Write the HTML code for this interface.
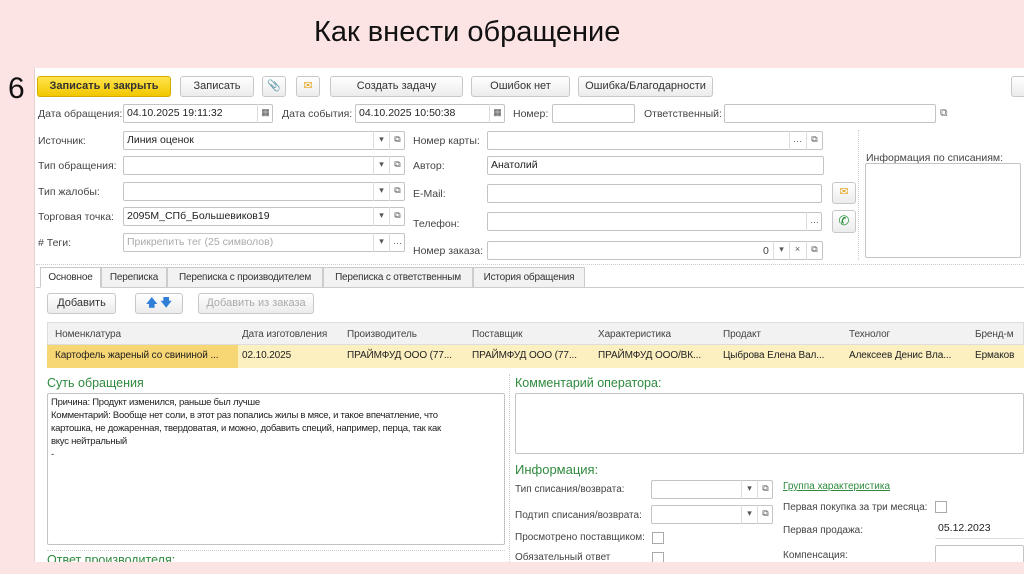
<!DOCTYPE html>
<html><head><meta charset="utf-8">
<style>
*{box-sizing:border-box;margin:0;padding:0}
body{width:1024px;height:574px;background:#fce4e4;font-family:"Liberation Sans",sans-serif;font-size:10.5px;color:#333;position:relative;overflow:hidden}
.a{position:absolute;white-space:nowrap}
.panel{position:absolute;left:34px;top:68px;width:990px;height:494px;background:#fff;border-left:1px solid #e6d0d0}
.btn{position:absolute;height:21px;border:1px solid #c8c8c8;border-radius:3px;background:linear-gradient(#fff,#ececec);text-align:center;line-height:19px;color:#333;font-size:11px}
.in{position:absolute;height:19px;border:1px solid #c4c4c4;border-radius:2px;background:#fff;line-height:17px;padding-left:3px;color:#222;white-space:nowrap;overflow:hidden}
.ic{position:absolute;width:16px;height:19px;text-align:center;line-height:17px;color:#555;font-size:9px;border-left:1px solid #ddd}
.lbl{position:absolute;color:#444;white-space:nowrap}
.g{color:#2f8a3e}
.cb{position:absolute;width:12px;height:12px;border:1px solid #aaa;background:#fff}
.tab{position:absolute;top:267px;height:21px;border:1px solid #ccc;background:#f2f2f2;line-height:19px;text-align:center;font-size:10px;letter-spacing:-0.2px}
.th{position:absolute;top:329px;font-size:10px;color:#444;letter-spacing:-0.1px}
.td{position:absolute;top:350px;font-size:10px;color:#222;letter-spacing:-0.1px}
</style></head><body>
<div class="a" style="left:314px;top:16px;font-size:29px;color:#111">Как внести обращение</div>
<div class="a" style="left:8px;top:72px;font-size:30px;color:#111">6</div>
<div class="panel"></div>

<div class="btn" style="left:37px;top:76px;width:134px;background:linear-gradient(#ffe44d,#f2c700);border-color:#d4ad00;font-weight:bold;color:#333">Записать и закрыть</div>
<div class="btn" style="left:180px;top:76px;width:74px">Записать</div>
<div class="btn" style="left:262px;top:76px;width:24px">&#128206;</div>
<div class="btn" style="left:296px;top:76px;width:24px;color:#e3a520">&#9993;</div>
<div class="btn" style="left:330px;top:76px;width:133px">Создать задачу</div>
<div class="btn" style="left:471px;top:76px;width:99px">Ошибок нет</div>
<div class="btn" style="left:578px;top:76px;width:135px">Ошибка/Благодарности</div>
<div class="btn" style="left:1011px;top:76px;width:20px"></div>

<div class="lbl" style="left:38px;top:108px">Дата обращения:</div>
<div class="in" style="left:123px;top:104px;width:150px">04.10.2025 19:11:32</div>
<div class="ic" style="left:257px;top:104px">&#9638;</div>
<div class="lbl" style="left:282px;top:108px">Дата события:</div>
<div class="in" style="left:355px;top:104px;width:150px">04.10.2025 10:50:38</div>
<div class="ic" style="left:489px;top:104px">&#9638;</div>
<div class="lbl" style="left:513px;top:108px">Номер:</div>
<div class="in" style="left:552px;top:104px;width:83px"></div>
<div class="lbl" style="left:644px;top:108px">Ответственный:</div>
<div class="in" style="left:724px;top:104px;width:212px"></div>
<div class="lbl" style="left:940px;top:107px;color:#666">&#10697;</div>

<div class="lbl" style="left:38px;top:135px">Источник:</div>
<div class="in" style="left:123px;top:131px;width:282px">Линия оценок</div>
<div class="lbl" style="left:38px;top:160px">Тип обращения:</div>
<div class="in" style="left:123px;top:156px;width:282px"></div>
<div class="lbl" style="left:38px;top:186px">Тип жалобы:</div>
<div class="in" style="left:123px;top:182px;width:282px"></div>
<div class="lbl" style="left:38px;top:211px">Торговая точка:</div>
<div class="in" style="left:123px;top:207px;width:282px">2095М_СПб_Большевиков19</div>
<div class="lbl" style="left:38px;top:237px"># Теги:</div>
<div class="in" style="left:123px;top:233px;width:282px;color:#aaa">Прикрепить тег (25 символов)</div>
<div class="ic" style="left:373px;top:131px">▾</div><div class="ic" style="left:389px;top:131px">&#10697;</div>
<div class="ic" style="left:373px;top:156px">▾</div><div class="ic" style="left:389px;top:156px">&#10697;</div>
<div class="ic" style="left:373px;top:182px">▾</div><div class="ic" style="left:389px;top:182px">&#10697;</div>
<div class="ic" style="left:373px;top:207px">▾</div><div class="ic" style="left:389px;top:207px">&#10697;</div>
<div class="ic" style="left:373px;top:233px">▾</div><div class="ic" style="left:389px;top:233px">…</div>

<div class="lbl" style="left:413px;top:135px">Номер карты:</div>
<div class="in" style="left:487px;top:131px;width:336px"></div>
<div class="ic" style="left:789px;top:131px">…</div><div class="ic" style="left:806px;top:131px">&#10697;</div>
<div class="lbl" style="left:413px;top:160px">Автор:</div>
<div class="in" style="left:487px;top:156px;width:337px">Анатолий</div>
<div class="lbl" style="left:413px;top:188px">E-Mail:</div>
<div class="in" style="left:487px;top:184px;width:335px"></div>
<div class="btn" style="left:832px;top:182px;width:24px;height:22px;color:#e3a520">&#9993;</div>
<div class="lbl" style="left:413px;top:218px">Телефон:</div>
<div class="in" style="left:487px;top:212px;width:335px"></div>
<div class="ic" style="left:806px;top:212px">…</div>
<div class="btn" style="left:832px;top:210px;width:24px;height:23px;color:#1a8a30;font-size:13px">&#9990;</div>
<div class="lbl" style="left:413px;top:245px">Номер заказа:</div>
<div class="in" style="left:487px;top:241px;width:336px"></div>
<div class="lbl" style="left:763px;top:245px">0</div>
<div class="ic" style="left:773px;top:241px">▾</div><div class="ic" style="left:789px;top:241px">×</div><div class="ic" style="left:806px;top:241px">&#10697;</div>
<div class="a" style="left:858px;top:130px;height:130px;border-left:1px dotted #ccc"></div>
<div class="lbl" style="left:866px;top:152px">Информация по списаниям:</div>
<div class="in" style="left:865px;top:163px;width:156px;height:95px"></div>

<div class="a" style="left:36px;top:264px;width:988px;border-top:1px dotted #ccc"></div>
<div class="a" style="left:36px;top:287px;width:988px;border-top:1px solid #ccc"></div>
<div class="tab" style="left:40px;width:61px;background:#fff;border-bottom-color:#fff">Основное</div>
<div class="tab" style="left:101px;width:66px">Переписка</div>
<div class="tab" style="left:167px;width:156px">Переписка с производителем</div>
<div class="tab" style="left:323px;width:150px">Переписка с ответственным</div>
<div class="tab" style="left:473px;width:112px">История обращения</div>

<div class="btn" style="left:47px;top:293px;width:69px">Добавить</div>
<div class="btn" style="left:135px;top:293px;width:48px;color:#2f7fd6;font-weight:bold">&#129093; &#129095;</div>
<div class="btn" style="left:198px;top:293px;width:116px;color:#aaa">Добавить из заказа</div>

<div class="a" style="left:47px;top:322px;width:977px;height:23px;background:#f2f2f2;border:1px solid #ddd"></div>
<div class="a" style="left:47px;top:345px;width:977px;height:23px;background:#fcefc0"></div>
<div class="a" style="left:47px;top:345px;width:191px;height:23px;background:#f7d674"></div>
<div class="th" style="left:55px">Номенклатура</div><div class="th" style="left:242px">Дата изготовления</div><div class="th" style="left:347px">Производитель</div><div class="th" style="left:472px">Поставщик</div><div class="th" style="left:598px">Характеристика</div><div class="th" style="left:723px">Продакт</div><div class="th" style="left:849px">Технолог</div><div class="th" style="left:975px">Бренд-м</div>
<div class="td" style="left:55px">Картофель жареный со свининой ...</div><div class="td" style="left:242px">02.10.2025</div><div class="td" style="left:347px">ПРАЙМФУД ООО (77...</div><div class="td" style="left:472px">ПРАЙМФУД ООО (77...</div><div class="td" style="left:598px">ПРАЙМФУД ООО/ВК...</div><div class="td" style="left:723px">Цыброва Елена Вал...</div><div class="td" style="left:849px">Алексеев Денис Вла...</div><div class="td" style="left:975px">Ермаков</div>

<div class="lbl g" style="left:47px;top:376px;font-size:12.5px">Суть обращения</div>
<div class="in" style="left:47px;top:393px;width:458px;height:152px;font-size:9.5px;line-height:13px;padding:2px 3px;letter-spacing:-0.25px">Причина: Продукт изменился, раньше был лучше<br>Комментарий: Вообще нет соли, в этот раз попались жилы в мясе, и такое впечатление, что<br>картошка, не дожаренная, твердоватая, и можно, добавить специй, например, перца, так как<br>вкус нейтральный<br>-</div>
<div class="a" style="left:47px;top:550px;width:458px;border-top:1px dotted #ccc"></div>
<div class="lbl g" style="left:47px;top:553px;font-size:12.5px">Ответ производителя:</div>
<div class="a" style="left:509px;top:374px;height:190px;border-left:1px dotted #ccc"></div>
<div class="lbl g" style="left:515px;top:376px;font-size:12.5px">Комментарий оператора:</div>
<div class="in" style="left:515px;top:393px;width:509px;height:61px"></div>
<div class="lbl g" style="left:515px;top:462px;font-size:13px">Информация:</div>
<div class="lbl" style="left:515px;top:484px;font-size:10px">Тип списания/возврата:</div>
<div class="in" style="left:651px;top:480px;width:122px"></div><div class="ic" style="left:741px;top:480px">▾</div><div class="ic" style="left:757px;top:480px">&#10697;</div>
<div class="lbl" style="left:515px;top:510px;font-size:10px">Подтип списания/возврата:</div>
<div class="in" style="left:651px;top:505px;width:122px"></div><div class="ic" style="left:741px;top:505px">▾</div><div class="ic" style="left:757px;top:505px">&#10697;</div>
<div class="lbl" style="left:515px;top:532px;font-size:10px">Просмотрено поставщиком:</div><div class="cb" style="left:652px;top:532px"></div>
<div class="lbl" style="left:515px;top:552px;font-size:10px">Обязательный ответ</div><div class="cb" style="left:652px;top:552px"></div>
<div class="lbl g" style="left:783px;top:481px;font-size:10px;text-decoration:underline">Группа характеристика</div>
<div class="lbl" style="left:783px;top:502px;font-size:10px">Первая покупка за три месяца:</div><div class="cb" style="left:935px;top:501px"></div>
<div class="lbl" style="left:783px;top:525px;font-size:10px">Первая продажа:</div>
<div class="in" style="left:935px;top:520px;width:89px;border:none;border-bottom:1px solid #ddd">05.12.2023</div>
<div class="lbl" style="left:783px;top:550px;font-size:10px">Компенсация:</div>
<div class="in" style="left:935px;top:545px;width:89px"></div>
<div class="a" style="left:0;top:562px;width:1024px;height:12px;background:#fce4e4"></div>
</body></html>
